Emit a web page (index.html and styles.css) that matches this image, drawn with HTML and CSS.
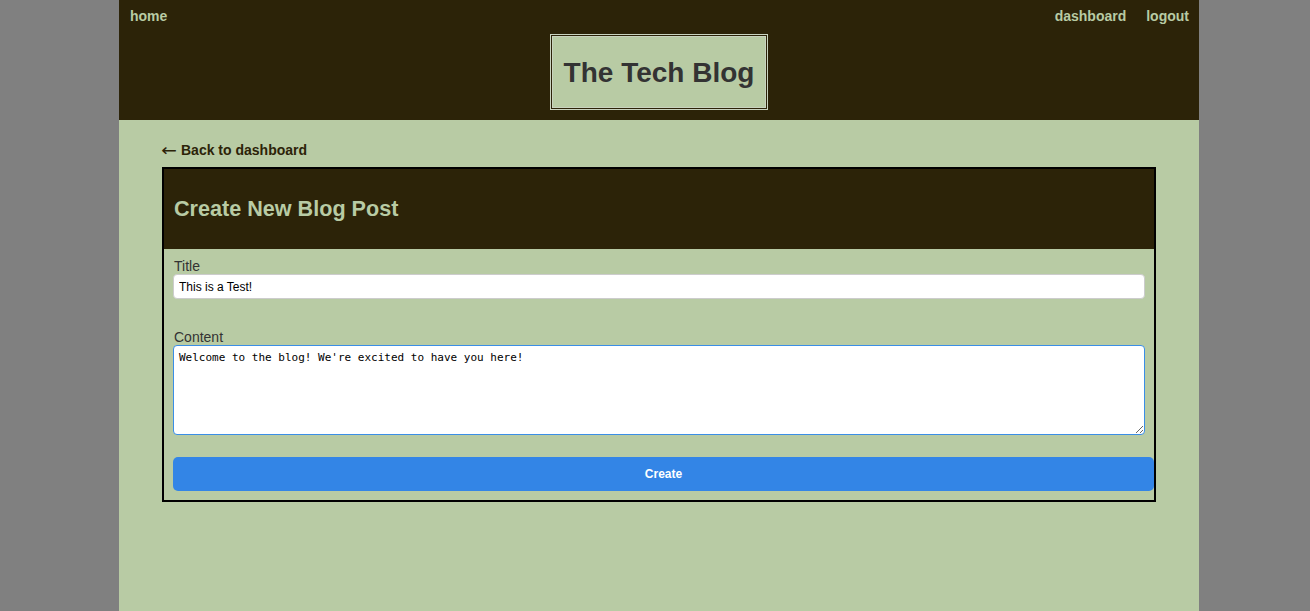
FILE: index.html
```html
<!DOCTYPE html>
<html lang="en">
<head>
<meta charset="utf-8">
<title>The Tech Blog</title>
<link rel="stylesheet" href="styles.css">
</head>
<body>
<div class="page">
  <header class="site-header">
    <nav class="nav">
      <a class="nav-link" href="#">home</a>
      <div class="nav-right">
        <a class="nav-link" href="#">dashboard</a>
        <a class="nav-link" href="#">logout</a>
      </div>
    </nav>
    <div class="brand-wrap">
      <h1 class="brand">The Tech Blog</h1>
    </div>
  </header>
  <main class="main">
    <a class="back-link" href="#"><span class="arrow">&larr;</span> Back to dashboard</a>
    <section class="card">
      <div class="card-header">
        <h2 class="card-title">Create New Blog Post</h2>
      </div>
      <form class="card-body">
        <label class="label" for="title">Title</label>
        <input class="input" id="title" type="text" value="This is a Test!">
        <label class="label label-content" for="content">Content</label>
        <textarea class="textarea" id="content">Welcome to the blog! We're excited to have you here!</textarea>
        <button class="btn" type="button">Create</button>
      </form>
    </section>
  </main>
</div>
</body>
</html>
```

FILE: styles.css
```css
html, body {
  margin: 0;
  padding: 0;
  height: 100%;
}
body {
  background: #808080;
  font-family: "Liberation Sans", Arial, sans-serif;
  padding-left: 8px;
  box-sizing: border-box;
}
.page {
  width: 1080px;
  margin: 0 auto;
  min-height: 100%;
  background: #b8cba4;
}
.site-header {
  background: #2c2308;
  height: 120px;
  box-sizing: border-box;
}
.nav {
  display: flex;
  justify-content: space-between;
  padding: 8px 10px 0 11px;
  line-height: 17px;
}
.nav-right {
  display: flex;
  gap: 20px;
}
.nav-link {
  color: #b8cba4;
  font-weight: bold;
  font-size: 14px;
  text-decoration: none;
}
.brand-wrap {
  display: flex;
  justify-content: center;
  margin-top: 9px;
}
.brand {
  margin: 0;
  width: 218px;
  height: 76px;
  box-sizing: border-box;
  display: flex;
  align-items: center;
  justify-content: center;
  background: #b8cba4;
  border: 1px solid #c9d3c0;
  box-shadow: inset 0 0 0 1px #2c2308, inset 0 0 0 2px #c9d3c0;
  color: #333333;
  font-size: 28px;
  font-weight: bold;
  padding-top: 1px;
}
.main {
  padding: 22px 43px 0;
}
.back-link {
  display: flex;
  align-items: center;
  gap: 3px;
  height: 17px;
  color: #2c2308;
  font-weight: bold;
  font-size: 14px;
  line-height: 17px;
  text-decoration: none;
}
.arrow {
  font-family: "DejaVu Sans", sans-serif;
  font-weight: normal;
  font-size: 17px;
  line-height: 17px;
  width: 16px;
  display: inline-block;
  transform: scaleX(1.1);
}
.card {
  margin-top: 8px;
  border: 2px solid #000;
}
.card-header {
  background: #2c2308;
  height: 80px;
  display: flex;
  align-items: center;
  padding-left: 10px;
}
.card-title {
  margin: 0;
  color: #b8cba4;
  font-size: 21.6px;
  font-weight: bold;
}
.card-body {
  display: flex;
  flex-direction: column;
  align-items: flex-start;
  padding: 9px 0 9px 9px;
}
.label {
  color: #333333;
  font-size: 14px;
  line-height: 16px;
  padding-left: 1px;
}
.label-content {
  margin-top: 30px;
}
.input {
  width: 972px;
  height: 25px;
  box-sizing: border-box;
  border: 1px solid #cccccc;
  border-radius: 4px;
  padding: 0 5px;
  font-family: "Liberation Sans", Arial, sans-serif;
  font-size: 12px;
  color: #000;
  background: #fff;
  outline: none;
}
.textarea {
  width: 972px;
  height: 90px;
  box-sizing: border-box;
  border: 1px solid #3a8ee6;
  border-radius: 4px;
  padding: 5px 5px 4px;
  font-family: "DejaVu Sans Mono", "Liberation Mono", monospace;
  font-size: 11px;
  line-height: 14px;
  color: #000;
  background: #fff;
  outline: none;
  margin: 0;
}
.btn {
  margin-top: 22px;
  width: 981px;
  height: 34px;
  border: none;
  border-radius: 5px;
  background: #3385e6;
  color: #ffffff;
  font-family: "Liberation Sans", Arial, sans-serif;
  font-weight: bold;
  font-size: 12px;
}
```
